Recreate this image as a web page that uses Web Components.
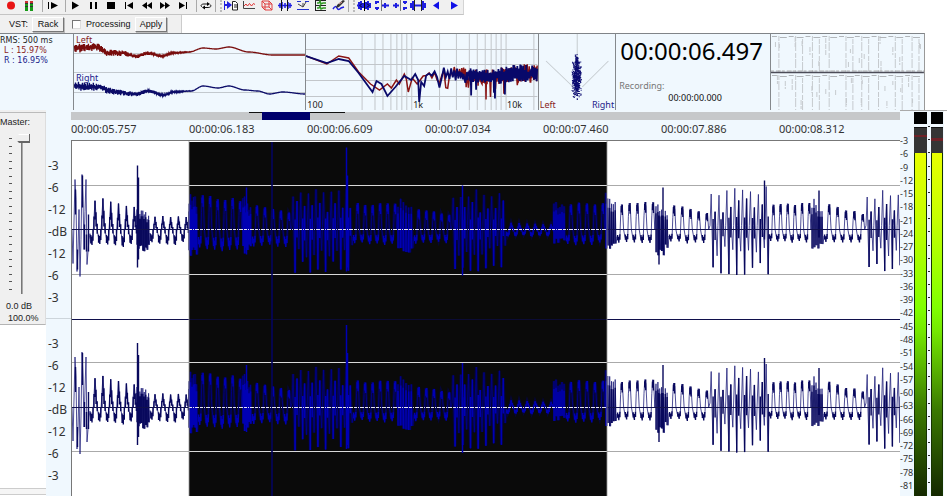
<!DOCTYPE html>
<html lang="en">
<head>
<meta charset="utf-8">
<meta name="viewport" content="width=device-width, initial-scale=1">
<title>Audio editor</title>
<style>
	html, body { margin: 0; height: 100%; background: #fff; }
	body { overflow: hidden; }
</style>
</head>
<body>

<audio-editor></audio-editor>

<script>
// repeatable noise, so the drawings are the same on every load
const noise = (seed) => () => {
	seed = (seed * 16807) % 2147483647;
	return seed / 2147483647;
};

const path = (points) => 'M' + points.map(p => p[0].toFixed(1) + ' ' + p[1].toFixed(1)).join('L');

// y on a line through the given points
const valueAt = (points, x) => {
	for (let i = 1; i < points.length; i++) {
		const [x0, y0] = points[i - 1];
		const [x1, y1] = points[i];
		if (x <= x1) {
			const t = (x - x0) / (x1 - x0);
			return y0 + (y1 - y0) * t * t * (3 - 2 * t);
		}
	}
	return points[points.length - 1][1];
};

const icons = {
	record: '<circle cx="8" cy="5.5" r="4" fill="#e81414"/>',
	levels: '<path d="M4 2h3M9 2h3" stroke="#c33" stroke-width="2"/><path d="M4 5h3M9 5h3M4 8h3M9 8h3M4 10h3M9 10h3" stroke="#179a17" stroke-width="2"/><path d="M4 3.5h3M9 3.5h3M4 6.5h3M9 6.5h3" stroke="#333"/>',
	playFrom: '<path d="M4.5 2v7" stroke="#000"/><path d="M7 2l7 3.5L7 9z"/>',
	play: '<path d="M5 1.5L12 5.5 5 9.5z"/>',
	pause: '<path d="M5 2h2v7H5zM10 2h2v7h-2z"/>',
	stop: '<path d="M4 2h8v7H4z"/>',
	start: '<path d="M4 2h1v7H4zM12 2v7L6 5.5z"/>',
	rewind: '<path d="M8 2v7L3 5.5zM13 2v7L8 5.5z"/>',
	forward: '<path d="M3 2v7l5-3.5zM8 2v7l5-3.5z"/>',
	end: '<path d="M4 2v7l6-3.5zM11 2h1v7h-1z"/>',
	loop: '<path d="M4 7C2 5.5 3.5 4 6 4h4M12 4.5c2 1.5 .5 3-2 3H6" fill="none" stroke="#111"/><path d="M9 2l3 2-3 2zM7 5.5v4l-3-2z"/>',
	paste: '<path d="M1 1v9h1V6h2v3l5-4-5-4v3H2V1z" fill="#1e1ee0"/><path d="M9.5 1.5h3l2 2v6.5h-5z" fill="#fff" stroke="#222"/><path d="M11 5h3M11 7h3" stroke="#222"/>',
	trend: '<path d="M2.5 1v7.5H14" fill="none" stroke="#444"/><path d="M3 6l2-2 1.5 2 2-2.5 2 2.5 2-2.5 1.5 1" fill="none" stroke="#e03030"/>',
	cube: '<path d="M3 1h7v6H3zM6 4h7v6H6zM3 1l3 3M10 1l3 3M3 7l3 3M10 7l3 3" fill="none" stroke="#df4040"/>',
	region: '<path d="M1 5.5h14M3 3v5M5 2v7M8 3v5M11 2v7M13 3v5" stroke="#1e1ee0" stroke-width="1.5"/><path d="M4.5 0v11M10.5 0v11" stroke="#111"/>',
	threshold: '<path d="M2 1.5h4M10 1.5h4M2 9.5h12" stroke="#2030d0"/><path d="M3 4l5 3 3-5M8 7V3" fill="none" stroke="#444"/>',
	lanes: '<path d="M2 .5h11M2 5.5h11M2 10.5h11M2.5 0v11" stroke="#222"/><path d="M4 3h2l1-2 1 3 2-1h3M4 8h2l1-2 1 3 2-1h3" fill="none" stroke="#329a25" stroke-width="1.5"/>',
	pen: '<path d="M2 9c2-3 3-3 4-1s2 2 4 0l3-1" fill="none" stroke="#1e1ee0" stroke-width="1.5"/><path d="M5 8l1-3 6-5 2 1-6 6z" fill="#333"/><path d="M8 4l3-2" stroke="#d99"/>',
	fit: '<path d="M1 5.5h14M3 2v7M5 1v9M7 3v5M10 2v7M12 1v9M14 3v5" stroke="#1e1ee0" stroke-width="2"/><path d="M8.5 0v11M6 3.5L4 5.5l2 2M11 3.5l2 2-2 2" fill="none" stroke="#000"/>',
	trimLeft: '<path d="M1 2h4M1 8h4M2 1v3M3 7v3M8 5.5h7M11 3v5" stroke="#1e1ee0" stroke-width="2"/><path d="M7.5 0v11" stroke="#777"/>',
	trimRight: '<path d="M11 2h4M11 8h4M13 1v3M12 7v3M1 5.5h6M4 3v5" stroke="#1e1ee0" stroke-width="2"/><path d="M8.5 0v11" stroke="#777"/>',
	span: '<path d="M1 3v5M3 1v9M13 1v9M15 3v5" stroke="#1e1ee0" stroke-width="2"/><path d="M3 5.5h10" stroke="#1e1ee0" stroke-width="2"/><path d="M4.5 0v11M11.5 0v11" stroke="#222"/>',
	left: '<path d="M11 1.5v8L5 5.5z" fill="#1010e8"/>',
	right: '<path d="M5 1.5v8l7-4z" fill="#1010e8"/>'
};

class ToolButton extends HTMLElement {
	connectedCallback() {
		this.attachShadow({ mode: 'open' }).innerHTML = `
			<style>
				:host { display: block; flex: none; }
				button { display: block; width: 18px; height: 12px; padding: 0; border: 0; background: none; }
				svg { display: block; width: 16px; height: 12px; margin: 0 auto; }
			</style>
			<button aria-label="${this.getAttribute('icon')}"><svg viewBox="0 0 16 12">${icons[this.getAttribute('icon')]}</svg></button>
		`;
	}
}

class ToolBar extends HTMLElement {
	connectedCallback() {
		const groups = [
			['record', 'levels'], '|', ['playFrom'], '|',
			['play', 'pause', 'stop', 'start', 'rewind', 'forward', 'end'], '|', ['loop'], ':',
			['paste', 'trend', 'cube', 'region', 'threshold', 'lanes', 'pen'], ':',
			['fit', 'trimLeft', 'trimRight', 'span', 'left', 'right']
		];
		this.attachShadow({ mode: 'open' }).innerHTML = `
			<style>
				:host { display: flex; align-self: flex-start; padding: 0 0 2px 2px; background: #f0f0f0; border-bottom: 1px solid #c4c4c4; border-right: 1px solid #d4d4d4; }
				i { flex: none; box-sizing: border-box; width: 5px; border-right: 1px solid #aaa; }
				i.grip { width: 7px; border-right: 2px dotted #bbb; border-left: 1px solid #aaa; }
			</style>
			${groups.map(g => g === '|' ? '<i></i>' : g === ':' ? '<i class="grip"></i>'
				: g.map(n => `<tool-button icon="${n}"></tool-button>`).join('')).join('')}
		`;
	}
}

class VstBar extends HTMLElement {
	connectedCallback() {
		this.attachShadow({ mode: 'open' }).innerHTML = `
			<style>
				:host { display: flex; align-items: center; align-self: flex-start; box-sizing: border-box; height: 18px; padding: 0 14px 0 9px; background: #f0f0f0; border-right: 1px solid #ccc; font: 9px "Liberation Sans", sans-serif; color: #111; }
				button { height: 15px; width: 32px; padding: 0; font: inherit; color: inherit; background: #f0f0f0; border: 1px solid; border-color: #fff #777 #777 #fff; box-shadow: 1px 1px 0 #bbb; }
				span { width: 23px; }
				input { appearance: none; width: 9px; height: 9px; margin: 0 5px 0 8px; background: #fff; border: 1px solid; border-color: #777 #ddd #ddd #777; }
				label { width: 49px; }
			</style>
			<span>VST:</span><button>Rack</button>
			<input type="checkbox" id="processing"><label for="processing">Processing</label>
			<button>Apply</button>
		`;
	}
}

class RmsStats extends HTMLElement {
	connectedCallback() {
		this.attachShadow({ mode: 'open' }).innerHTML = `
			<style>
				:host { display: block; font: 8px/10px "DejaVu Sans", sans-serif; color: #222; white-space: nowrap; padding-top: 2px; }
				p { margin: 0 0 0 4px; }
				.l { color: #8a1c1c; }
				.r { color: #22228a; }
			</style>
			<div>RMS: 500 ms</div><p class="l">L : 15.97%</p><p class="r">R : 16.95%</p>
		`;
	}
}

class StereoScope extends HTMLElement {
	connectedCallback() {
		const left = [[0, 14], [22, 13], [35, 19], [50, 19], [62, 22], [75, 19], [88, 22], [100, 19], [116, 18], [130, 14], [143, 15], [156, 13], [176, 18], [200, 21], [233, 21]];
		const right = [[0, 52], [25, 53], [35, 57], [62, 60], [75, 57], [90, 61], [100, 58], [118, 57], [130, 52], [145, 54], [156, 52], [172, 56], [185, 57], [197, 60], [210, 58], [233, 60]];
		const trace = (points, seed) => {
			const rand = noise(seed);
			const out = [];
			for (let x = 0, side = 1; x <= 233; x += .5, side = -side) {
				const amp = Math.max(0, 1 - x / 124) * 4;
				out.push([x, valueAt(points, x) + side * (.2 + rand()) * amp]);
			}
			return path(out);
		};
		this.attachShadow({ mode: 'open' }).innerHTML = `
			<style>
				:host { display: grid; grid-template-rows: 1fr 1fr; font-size: 9px; line-height: 12px; }
				svg { grid-area: 1 / 1 / 3 / 2; width: 100%; height: 100%; }
				span { grid-column: 1; padding: 0 2px; z-index: 1; }
				.l { grid-row: 1; color: #8a1c1c; }
				.r { grid-row: 2; color: #22228a; }
			</style>
			<svg viewBox="0 0 233 76" preserveAspectRatio="none" fill="none">
				<path d="M0 19.5h233M0 38.5h233M0 58.5h233" stroke="#c3c9ce"/>
				<path d="${trace(left, 71)}" stroke="#780c0c" stroke-width="1.3"/>
				<path d="${trace(right, 93)}" stroke="#0c0c68" stroke-width="1.3"/>
			</svg>
			<span class="l">Left</span><span class="r">Right</span>
		`;
	}
}

class SpectrumChart extends HTMLElement {
	connectedCallback() {
		const columns = [56, 69, 77, 85, 91, 96, 101, 106, 134, 151, 164, 172, 180, 186, 191, 196, 201, 229];
		const blue = [[0, 22], [21, 29], [33, 25], [43, 27], [53, 39], [67, 58], [71, 47], [76, 50], [82, 62], [90, 53], [99, 42], [106, 46], [110, 40], [113, 46], [114, 68], [116, 48], [119, 52]];
		const red = [[0, 22], [21, 30], [33, 22], [43, 24], [53, 38], [65, 50], [74, 56], [82, 50], [86, 54], [91, 46], [94, 50], [99, 40], [101, 45], [103, 58], [107, 44], [112, 50], [118, 42]];
		const tail = (points, seed, low) => {
			const rand = noise(seed);
			const out = points.slice();
			for (let x = 121, side = 1; x <= 233; x += Math.max(.5, 3 - (x - 121) / 18), side = -side) {
				const mid = 41 + Math.sin((x - 162) / 12) * (x > 136 ? 2 : 0);
				const amp = x < 136 ? 5 : 6 + (x - 136) / 40;
				let y = mid + side * (.1 + rand()) * amp;
				if (rand() > .93 && x > 134) y += low * rand();
				out.push([x, y]);
			}
			return path(out);
		};
		this.attachShadow({ mode: 'open' }).innerHTML = `
			<style>
				:host { display: grid; font-size: 9px; line-height: 10px; color: #222; }
				svg { grid-area: 1 / 1; width: 100%; height: 100%; }
				div { grid-area: 1 / 1; align-self: end; display: grid; grid-template-columns: 107fr 95fr 31fr; padding-left: 1px; }
			</style>
			<svg viewBox="0 0 233 76" preserveAspectRatio="none" fill="none">
				<path d="M0 15.5h233M0 30.5h233M0 46.5h233M0 62.5h233${columns.map(x => `M${x}.5 0v76`).join('')}" stroke="#c2c6ca"/>
				<path d="${tail(red, 412, 24)}" stroke="#8a1414" stroke-width="1.5"/>
				<path d="${tail(blue, 77, 16)}" stroke="#08086a" stroke-width="1.8"/>
			</svg>
			<div><span>100</span><span>1k</span><span>10k</span></div>
		`;
	}
}

class VectorScope extends HTMLElement {
	connectedCallback() {
		const rand = noise(5150);
		let dots = '';
		for (let i = 0; i < 620; i++) {
			const y = 19 + (rand() + rand()) / 2 * 47;
			const w = y < 28 ? 2 : 5;
			const x = 37 + (rand() + rand() - 1) * w;
			dots += `M${x.toFixed(1)} ${y.toFixed(1)}h1`;
		}
		this.attachShadow({ mode: 'open' }).innerHTML = `
			<style>
				:host { display: grid; font-size: 9px; line-height: 10px; }
				svg { grid-area: 1 / 1; width: 100%; height: 100%; }
				div { grid-area: 1 / 1; align-self: end; display: flex; justify-content: space-between; padding: 0 1px; color: #8a1c1c; }
				.r { color: #22228a; }
			</style>
			<svg viewBox="0 0 76 76" preserveAspectRatio="none" fill="none">
				<path d="M38 0v62M7 27l27 26M69 27L43 53" stroke="#c6ccd0"/>
				<path d="${dots}" stroke="#0a0a70"/>
			</svg>
			<div><span>Left</span><span class="r">Right</span></div>
		`;
	}
}

class TimeDisplay extends HTMLElement {
	connectedCallback() {
		this.attachShadow({ mode: 'open' }).innerHTML = `
			<style>
				:host { display: block; white-space: nowrap; color: #111; }
				div { font-size: 24px; line-height: 34px; padding-left: 4px; color: #000; }
				p { margin: 0; padding: 12px 0 0 3px; font-size: 9px; line-height: 12px; color: #777; }
				time { display: block; padding-left: 4px; font-size: 9px; line-height: 12px; text-align: center; }
			</style>
			<div>00:00:06.497</div><p>Recording:</p><time>00:00:00.000</time>
		`;
	}
}

class HistoryChart extends HTMLElement {
	connectedCallback() {
		const rand = noise(2024);
		let faint = '', caps = '';
		for (let lane = 0; lane < 2; lane++) {
			const top = lane * 39 + 2;
			for (let n = 0; n < 9; n++) {
				const x = 8 + n * 17 - (n > 4 ? 1 : 0);
				faint += `M${x} ${top}v36`;
				if (n % 3) faint += `M${x + 7} ${top + 3}v32`;
				for (let k = 0; k < 2; k++) faint += `M${(x - 4 + rand() * 12).toFixed(0)}.5 ${(top + rand() * 26).toFixed(0)}v${(3 + rand() * 8).toFixed(0)}`;
				caps += `M${x - 7} ${top + .5}h5M${x + 1} ${top + 1.5}h7`;
			}
		}
		this.attachShadow({ mode: 'open' }).innerHTML = `
			<style>
				:host { display: block; }
				svg { display: block; width: 100%; height: 100%; }
			</style>
			<svg viewBox="0 0 155 76" preserveAspectRatio="none" fill="none">
				<path d="${faint}" stroke="#c6cace" stroke-dasharray="5 1 9 2"/>
				<path d="${caps}" stroke="#b0b4b8"/>
				<path d="M0 37h155" stroke="#aaa" stroke-dasharray="3 2 5 1"/>
				<path d="M0 38.5h155" stroke="#4c4c58" stroke-width="1.5"/>
			</svg>
		`;
	}
}

class MonitorRow extends HTMLElement {
	connectedCallback() {
		this.attachShadow({ mode: 'open' }).innerHTML = `
			<style>
				:host { display: grid; grid-template-columns: 73px 3fr 3fr 1fr 2fr 2fr 22px; height: 77px; }
				.panel { box-sizing: border-box; min-width: 0; overflow: hidden; background: #f0f8fe; border-top: 1px solid #808488; }
				.panel + .panel { border-left: 1px solid #85898d; }
				.panel:last-child { border-right: 1px solid #999; }
			</style>
			<rms-stats class="panel"></rms-stats>
			<stereo-scope class="panel"></stereo-scope>
			<spectrum-chart class="panel"></spectrum-chart>
			<vector-scope class="panel"></vector-scope>
			<time-display class="panel"></time-display>
			<history-chart class="panel"></history-chart>
		`;
	}
}

class MasterFader extends HTMLElement {
	connectedCallback() {
		this.attachShadow({ mode: 'open' }).innerHTML = `
			<style>
				:host { display: flex; flex-direction: column; background: #fff; font: 9px/12px "Liberation Sans", sans-serif; color: #222; }
				.top { height: 2px; border-bottom: 1px solid #bbb; background: #f0f0f0; }
				.panel { background: #f0f0f0; border-bottom: 1px solid #b4b4b4; border-right: 1px solid #ddd; }
				label { display: block; padding-top: 3px; }
				.fader { display: flex; height: 160px; margin: 6px 0; padding-left: 9px; }
				.ticks { width: 3px; margin: 4px 3px 4px 0; display: flex; flex-direction: column; justify-content: space-between; }
				.ticks i { height: 1px; background: #555; }
				input { appearance: none; writing-mode: vertical-lr; direction: rtl; width: 15px; height: 160px; margin: 0; background: linear-gradient(90deg, transparent 6px, #777 6px, #777 7px, #aaa 7px, #aaa 8px, transparent 8px) no-repeat; }
				input::-webkit-slider-thumb { appearance: none; width: 15px; height: 9px; background: linear-gradient(#fff 1px, #eee 1px, #eee 7px, #666 7px); border-right: 1px solid #666; box-sizing: border-box; clip-path: polygon(0 50%, 4px 0, 100% 0, 100% 100%, 4px 100%); }
				output { display: block; padding-left: 6px; }
				output + output { padding-left: 8px; }
				.foot { margin-top: auto; height: 5px; border-top: 1px solid #ccc; border-bottom: 1px solid #ccc; background: #f5f5f5; margin-bottom: 1px; }
			</style>
			<div class="top"></div>
			<div class="panel">
				<label for="gain">Master:</label>
				<div class="fader">
					<div class="ticks">${'<i></i>'.repeat(21)}</div>
					<input id="gain" type="range" min="0" max="100" value="100">
				</div>
				<output for="gain">0.0 dB</output><output for="gain">100.0%</output>
			</div>
			<div class="foot"></div>
		`;
	}
}

class DbRuler extends HTMLElement {
	connectedCallback() {
		const marks = ['-3', '-6', '-12', '-dB', '-12', '-6', '-3'];
		const channel = `<div>${marks.map(m => `<span>${m}</span>`).join('')}</div>`;
		this.attachShadow({ mode: 'open' }).innerHTML = `
			<style>
				:host { display: grid; grid-template-rows: 1fr 1fr; font-size: 12px; line-height: 22px; color: #333; }
				div { display: flex; flex-direction: column; justify-content: center; padding: 5px 0 0 2px; white-space: nowrap; }
				div + div { border-top: 1px solid #cdd5db; }
			</style>
			${channel}${channel}
		`;
	}
}

class TimeRuler extends HTMLElement {
	connectedCallback() {
		const times = ['00:00:05.757', '00:00:06.183', '00:00:06.609', '00:00:07.034', '00:00:07.460', '00:00:07.886', '00:00:08.312'];
		this.attachShadow({ mode: 'open' }).innerHTML = `
			<style>
				:host { display: block; padding-top: 2px; font-size: 11px; line-height: 18px; color: #333; }
				.bar { display: grid; grid-template-columns: 178fr 13fr 48fr 35fr 555fr; height: 8px; background: #c6c8ca; }
				.range { border-top: 1px solid #111; }
				.view { background: #00006c; }
				.times { display: grid; grid-template-columns: repeat(7, 118fr) 3fr; }
			</style>
			<div class="bar"><i></i><i class="range"></i><i class="view"></i><i class="range"></i><i></i></div>
			<div class="times">${times.map(t => `<span>${t}</span>`).join('')}</div>
		`;
	}
}

// from, to, period, peak at start, peak at end, trough, kind
const segments = [
	[18, 65, 7.8, 32, 21, 15, 'sharp'],
	[65, 78, 1.5, 26, 14, 25, 'dense'],
	[78, 117, 7.8, 14, 12, 13, 'sharp'],
	[117, 126, 1.6, 39, 30, 28, 'dense'],
	[126, 171, 7.8, 34, 30, 18, 'osc'],
	[171, 180, 1.6, 38, 26, 24, 'dense'],
	[180, 220, 7.6, 26, 15, 15, 'osc'],
	[220, 281, 3.8, 38, 44, 44, 'tall'],
	[281, 326, 7.6, 27, 25, 13, 'osc'],
	[326, 342, 2.6, 32, 28, 24, 'dense'],
	[342, 380, 7.8, 21, 14, 12, 'osc'],
	[380, 434, 3.9, 38, 42, 45, 'tall'],
	[434, 482, 7.8, 7, 5, 6, 'sharp'],
	[482, 494, 2, 28, 28, 14, 'dense'],
	[494, 534, 7.3, 27, 27, 13, 'osc'],
	[534, 545, 1.8, 42, 32, 23, 'dense'],
	[545, 584, 7.4, 27, 27, 12, 'osc'],
	[584, 597, 2, 36, 12, 26, 'dense'],
	[597, 638, 7.8, 26, 14, 12, 'osc'],
	[638, 697, 4, 40, 44, 47, 'tall'],
	[697, 740, 7.3, 26, 26, 11, 'osc'],
	[740, 752, 2, 34, 24, 20, 'dense'],
	[752, 794, 7.8, 25, 14, 12, 'osc'],
	[794, 829, 4, 36, 42, 45, 'tall']
];

const buildWave = (seed) => {
	const rand = noise(seed);
	const line = [[0, 0], [1, 34], [3, -50], [4, -30], [5, 42], [6, 20], [7, -20], [8, 47], [9, 10], [10, -55], [11, -30], [12, 20], [13, -18], [14, -50], [15, 35], [17, 10]];
	const solid = [[3.5, -40, -15], [5.5, 20, 40], [10.5, -54, -22], [12.5, -5, 20], [14.5, 5, 22], [16.5, -15, 22]];
	for (const [from, to, period, up0, up1, down, kind] of segments) {
		const count = Math.round((to - from) / period);
		const step = (to - from) / count;
		for (let n = 0; n < count; n++) {
			const x = from + n * step;
			const up = up0 + (up1 - up0) * n / count;
			const w = step / 7.8;
			if (kind === 'osc') {
				const peak = up * (.92 + rand() * .1);
				const low = down * (.9 + rand() * .2);
				const cap = Math.min(8, peak * .4);
				line.push([x, low * .6], [x + 1.6 * w, low], [x + 3 * w, low * .4], [x + 3.6 * w, -peak * .5], [x + 4.4 * w, -peak], [x + 5.5 * w, -peak * .85], [x + 6.6 * w, 0]);
				solid.push([x + .6 * w, low * .45, low * .9], [x + 1.8 * w, low * .6, low * 1.1], [x + 2.9 * w, low * .4, low * .85], [x + 4.3 * w, -peak * .94, -peak + cap], [x + 5.3 * w, -peak, -peak * .9 + cap]);
			} else if (kind === 'sharp') {
				const peak = up * (.9 + rand() * .14);
				const low = down * (.85 + rand() * .25);
				line.push([x, low * .3], [x + 1.6 * w, low], [x + 3 * w, low * .4], [x + 4 * w, -peak * .4], [x + 5 * w, -peak], [x + 6 * w, -peak * .5], [x + 7 * w, 0]);
				solid.push([x + .8 * w, low * .4, low], [x + 2 * w, low * .5, low * 1.1], [x + 3 * w, 0, low * .8], [x + 4 * w, -peak * .45, 0], [x + 5 * w, -peak, -peak * .35], [x + 6 * w, -peak * .6, -peak * .1], [x + 7.2 * w, -peak * .2, low * .3]);
			} else if (kind === 'dense') {
				const peak = up * (.6 + rand() * .4);
				const low = down * (.55 + rand() * .45);
				line.push([x, -peak], [x + step / 2, low]);
				solid.push([x, -peak * .7, low]);
			} else {
				const peak = up * (n % 2 ? .4 + rand() * .35 : .8 + rand() * .22);
				const low = down * (n % 2 ? .35 + rand() * .3 : .7 + rand() * .3);
				line.push([x, -4], [x + step * .3, -peak], [x + step * .5, 0], [x + step * .8, low]);
				if (n % 2) solid.push([x + step * .3, -peak, low * .4]);
				else solid.push([x + step * .8, -peak * .3, low]);
			}
		}
	}
	// single transients
	solid.push([65.5, -64, 38], [66.5, -52, 30], [174.5, -42, 25], [274.5, -82, 42], [275.5, -54, 38], [390.5, -44, 46], [587, -14, 35], [591, -42, 20], [692.5, -49, 10], [747, -39, 8]);
	return { line, solid };
};

class WaveView extends HTMLElement {
	connectedCallback() {
		const { line: points, solid: bars } = buildWave(33);
		let line = '', solid = '';
		for (const mid of [88.5, 266]) {
			line += path(points.map(([x, y]) => [x, mid + y]));
			solid += bars.map(([x, a, b]) => `M${x.toFixed(1)} ${(mid + a).toFixed(1)}V${(mid + b).toFixed(1)}`).join('');
		}
		const rules = 'M0 44.5h829M0 133.5h829M0 221.5h829M0 310.5h829';
		this.attachShadow({ mode: 'open' }).innerHTML = `
			<style>
				:host { display: block; min-height: 0; border-top: 1px solid #777; border-left: 1px solid #777; background: #fff; }
				svg { display: block; width: 100%; height: 100%; }
			</style>
			<svg viewBox="0 0 828 355" preserveAspectRatio="none" fill="none">
				<defs><clipPath id="selected"><path d="M117 0h418v355H117z"/></clipPath></defs>
				<path d="${rules}" stroke="#aaa"/>
				<path d="${line}" stroke="#22227c" stroke-width=".8"/>
				<path d="${solid}" stroke="#08085c" stroke-width="1.4"/>
				<path d="M0 88.5h829M0 266.5h829M0 178.5h829" stroke="#10104c"/>
				<g clip-path="url(#selected)">
					<path d="M117 1h418v354H117z" fill="#0a0a0a"/>
					<path d="M117 178.5h418" stroke="#0b0b35"/>
					<path d="${rules}" stroke="#d8d8d8"/>
					<path d="${line}" stroke="#00006c" stroke-width="3" opacity=".45"/>
					<path d="${line}" stroke="#000090" stroke-width=".8"/>
					<path d="${solid}" stroke="#0000b4" stroke-width="1.5"/>
					<path d="M200 1v354" stroke="#04045e" stroke-width="2" opacity=".8"/>
					<path d="M117 88.5h418M117 266.5h418" stroke="#e4e4f4" stroke-dasharray="3 1 1 1 4 1"/>
				</g>
				<path d="M117 0v355M535 0v355" stroke="#999" stroke-width=".8"/>
			</svg>
		`;
	}
}

class LevelMeter extends HTMLElement {
	connectedCallback() {
		const marks = [...Array(27)].map((_, n) => `<span>-${(n + 1) * 3}</span>`).join('');
		this.attachShadow({ mode: 'open' }).innerHTML = `
			<style>
				:host { display: grid; grid-template-columns: 14px 13px 4px 12px; align-content: stretch; border-top: 1px solid #aaa; font-size: 9px; line-height: 12px; color: #333; background: linear-gradient(90deg, #f0f8fe 44px, #fff 44px); }
				.marks, .ticks { display: flex; flex-direction: column; justify-content: space-between; white-space: nowrap; padding: 24px 0 4px; }
				.ticks { padding: 15px 1px 13px; }
				.ticks i { height: 1px; background: #222; }
				.bar { display: grid; grid-template-rows: 12px 29px 1fr; padding-top: 1px; }
				.clip { background: #000; }
				.head { margin-top: 3px; border-top: 1px solid #111; background: linear-gradient(#353535 7px, #6e2228 7px, #6e2228 9px, #353535 9px); }
				.low .head { background: linear-gradient(#353535 10px, #6e2228 10px, #6e2228 13px, #353535 13px); }
				.fill { border: solid #163300; border-width: 0 1px; background: linear-gradient(#e8ff00, #c4ff00 20%, #80ff00 45%, #74e800 52%, #3a7800 75%, #142800); }
			</style>
			<div class="marks">${marks}</div>
			<div class="bar"><i class="clip"></i><i class="head"></i><i class="fill"></i></div>
			<div class="ticks">${'<i></i>'.repeat(28)}</div>
			<div class="bar low"><i class="clip"></i><i class="head"></i><i class="fill"></i></div>
		`;
	}
}

class AudioEditor extends HTMLElement {
	connectedCallback() {
		this.attachShadow({ mode: 'open' }).innerHTML = `
			<style>
				:host { display: flex; flex-direction: column; height: 100vh; font-family: "Noto Sans", sans-serif; }
				main { flex: 1; min-height: 0; display: grid; grid-template: 30px minmax(0, 1fr) / 46px 25px minmax(0, 1fr) 47px; background: #f0f8fe; }
				master-fader { grid-area: 1 / 1 / 3 / 2; min-height: 0; }
				db-ruler { grid-area: 2 / 2; }
				time-ruler { grid-area: 1 / 3; }
				wave-view { grid-area: 2 / 3; }
				level-meter { grid-area: 1 / 4 / 3 / 5; min-height: 0; }
			</style>
			<tool-bar></tool-bar>
			<vst-bar></vst-bar>
			<monitor-row></monitor-row>
			<main>
				<master-fader></master-fader>
				<db-ruler></db-ruler>
				<time-ruler></time-ruler>
				<wave-view></wave-view>
				<level-meter></level-meter>
			</main>
		`;
	}
}

customElements.define('tool-button', ToolButton);
customElements.define('tool-bar', ToolBar);
customElements.define('vst-bar', VstBar);
customElements.define('rms-stats', RmsStats);
customElements.define('stereo-scope', StereoScope);
customElements.define('spectrum-chart', SpectrumChart);
customElements.define('vector-scope', VectorScope);
customElements.define('time-display', TimeDisplay);
customElements.define('history-chart', HistoryChart);
customElements.define('monitor-row', MonitorRow);
customElements.define('master-fader', MasterFader);
customElements.define('db-ruler', DbRuler);
customElements.define('time-ruler', TimeRuler);
customElements.define('wave-view', WaveView);
customElements.define('level-meter', LevelMeter);
customElements.define('audio-editor', AudioEditor);
</script>
</body>
</html>
